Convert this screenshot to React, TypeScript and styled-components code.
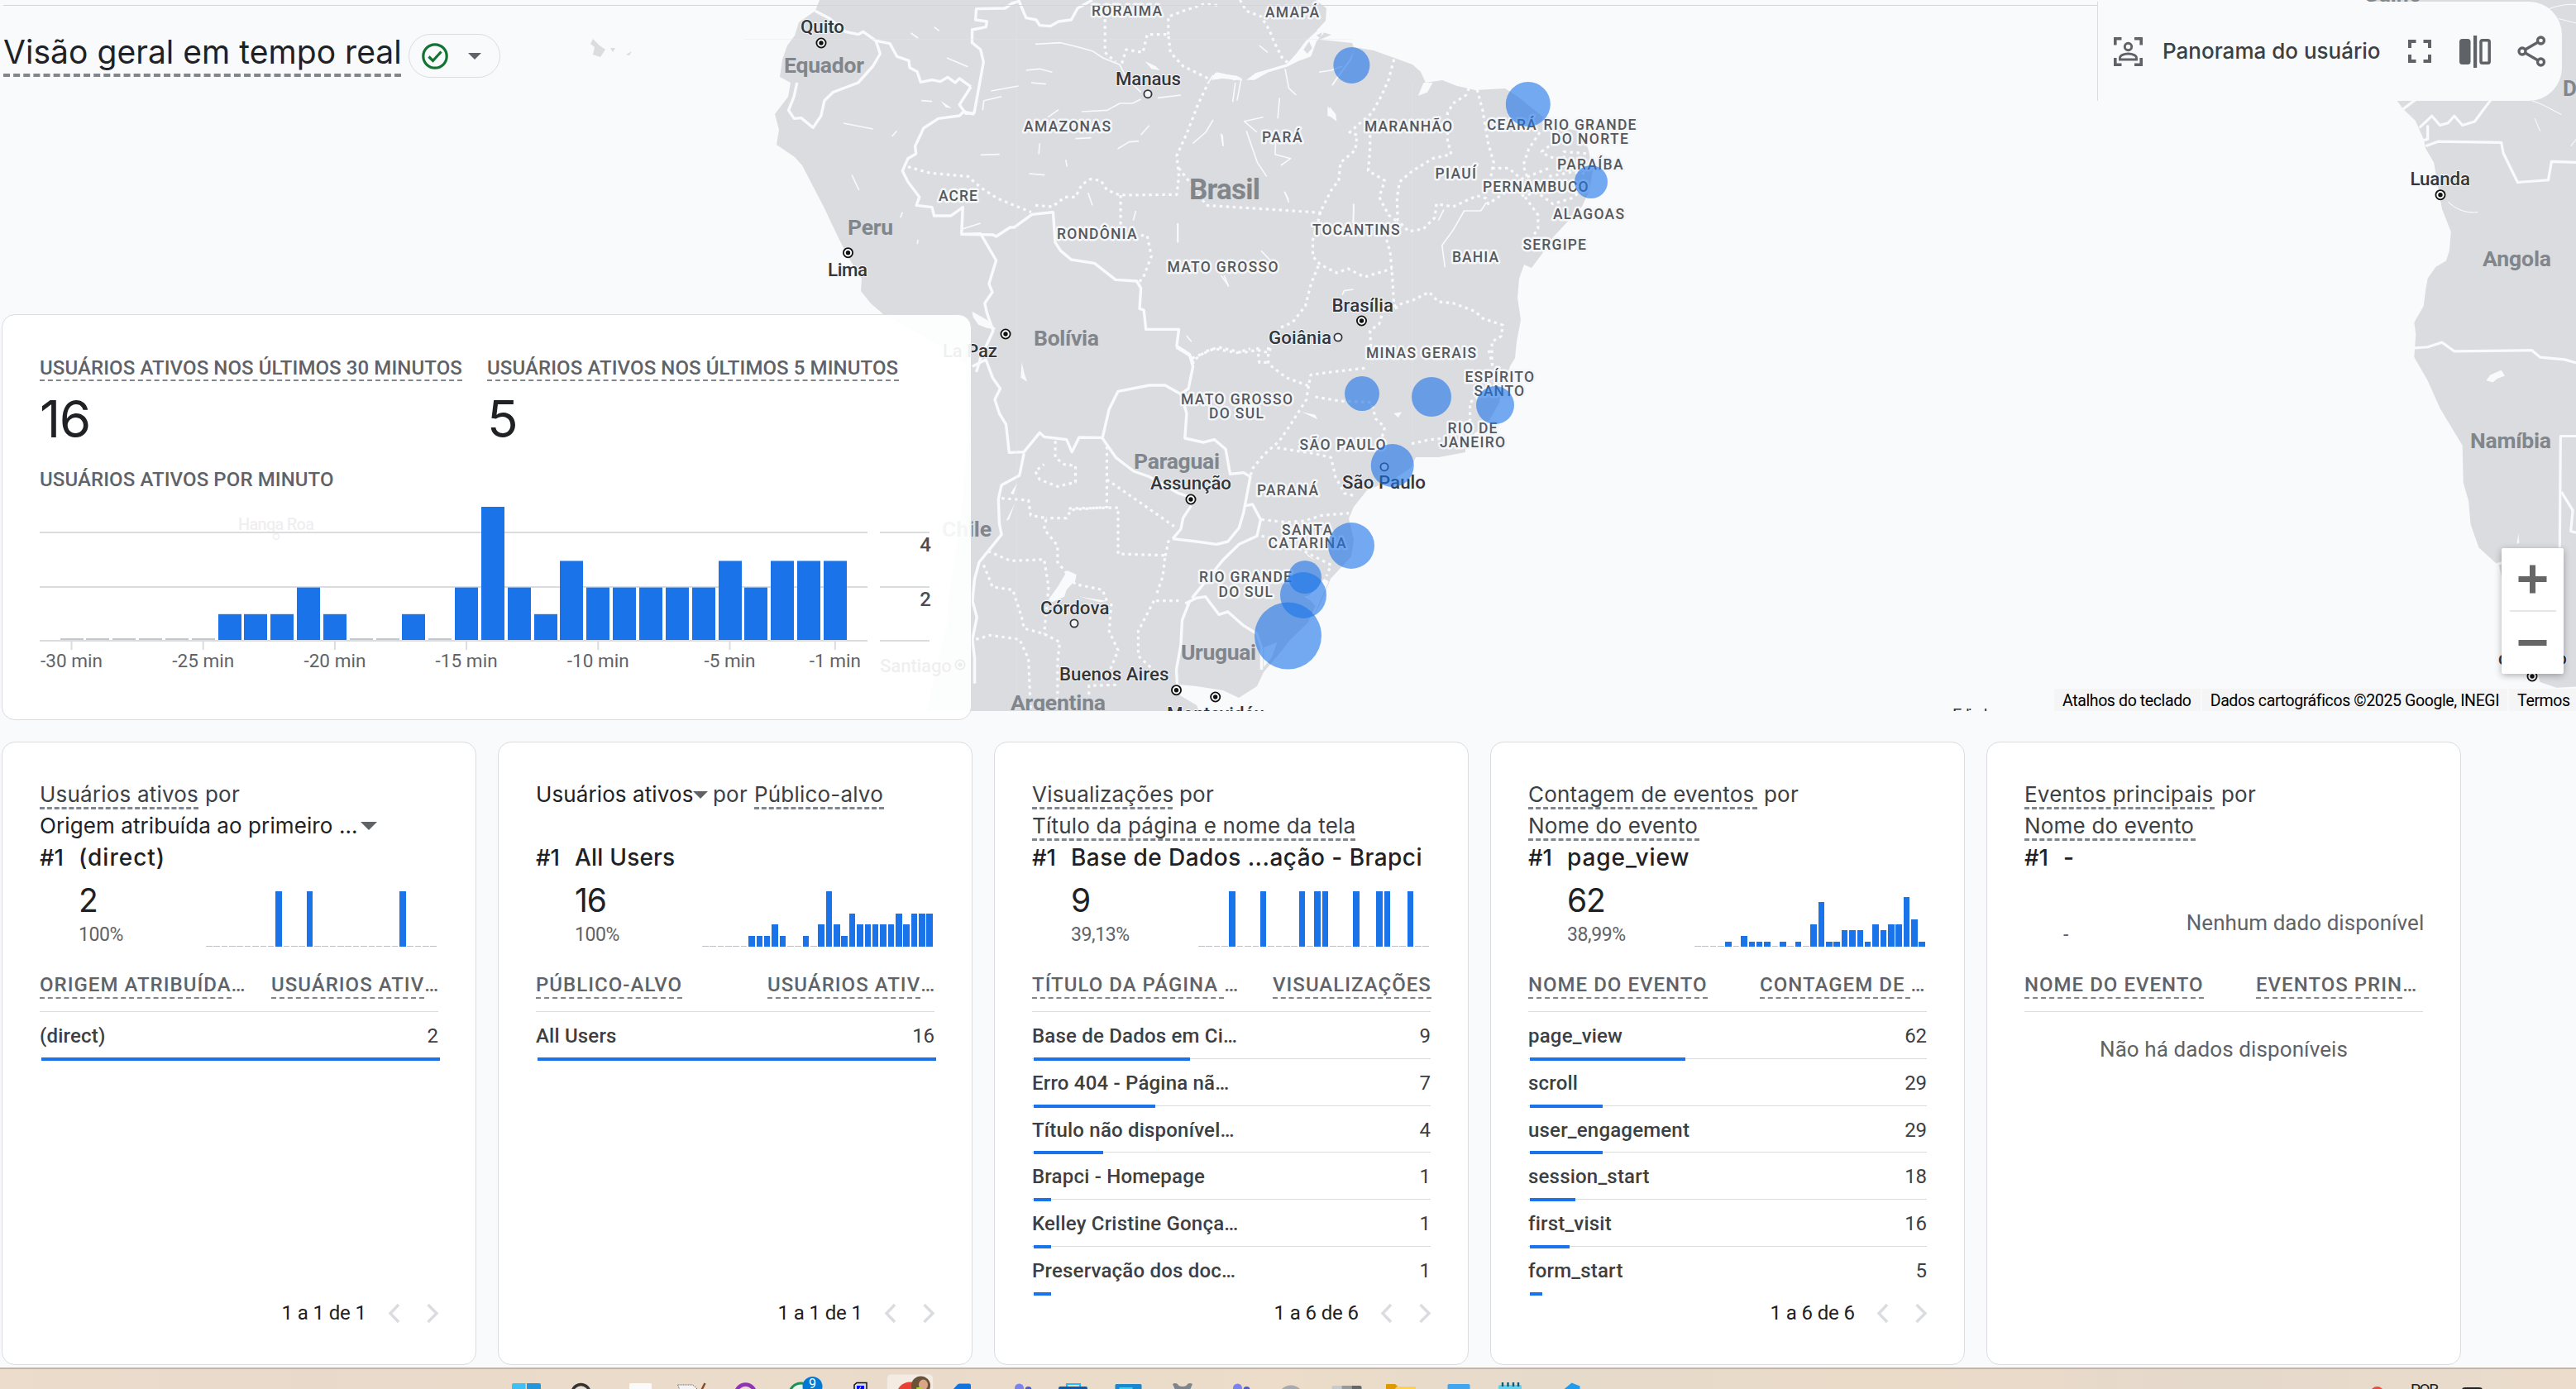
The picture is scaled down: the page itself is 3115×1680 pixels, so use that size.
import React from 'react';
import styled, { createGlobalStyle } from 'styled-components';

const SANS = "Roboto, 'Liberation Sans', sans-serif";
const DISPLAY = "Inter, Roboto, 'Liberation Sans', sans-serif";
const SEA = '#f8fafc';
const LAND = '#dbdce0';
const BLUE = '#1a73e8';

const Global = createGlobalStyle`
  * { box-sizing: border-box; }
  html, body { margin: 0; padding: 0; background: ${SEA}; }
  body { font-family: ${SANS}; color: #202124; overflow: hidden; }
`;

const Page = styled.div`
  width: 3115px;
  height: 1680px;
  display: flex;
  flex-direction: column;
  background: ${SEA};
  overflow: hidden;
`;

/* ---------- map ---------- */

const Hero = styled.section`
  position: relative;
  height: 897px;
  flex: none;
  display: grid;
  grid-template-columns: 1173px 1fr 579px;
`;

const MapSvg = styled.svg`
  position: absolute;
  left: 0;
  top: 0;
  display: block;
  font-family: ${SANS};
`;

const TopRule = styled.div`
  position: absolute;
  left: 4px;
  top: 6px;
  width: 2551px;
  height: 1px;
  background: #d3d5d8;
`;

type Label = [string, number, number, number];

const states: Label[] = [
  ['RORAIMA', 1320, 1405, 19.3], ['AMAPÁ', 1530, 1595, 21], ['AMAZONAS', 1238, 1343, 159],
  ['ACRE', 1135, 1182, 242.5], ['PARÁ', 1526, 1574.5, 172], ['RONDÔNIA', 1278, 1374.5, 289],
  ['TOCANTINS', 1587, 1692.5, 284], ['MATO GROSSO', 1411.5, 1545.5, 329], ['MARANHÃO', 1650, 1756, 159],
  ['CEARÁ', 1798, 1857.5, 156.5], ['RIO GRANDE', 1866.5, 1978.5, 157], ['DO NORTE', 1876, 1969, 174],
  ['PARAÍBA', 1883, 1962.5, 205], ['PIAUÍ', 1735.5, 1785, 216], ['PERNAMBUCO', 1793, 1920.5, 232],
  ['ALAGOAS', 1878, 1964, 265], ['SERGIPE', 1841.5, 1918, 302], ['BAHIA', 1756, 1812, 317],
  ['MINAS GERAIS', 1652, 1785, 432.6], ['MATO GROSSO', 1428, 1563, 489], ['DO SUL', 1462, 1528, 506],
  ['ESPÍRITO', 1771.5, 1855, 461.7], ['SANTO', 1782.5, 1843, 479], ['RIO DE', 1750.5, 1810.5, 524],
  ['JANEIRO', 1741, 1820, 541], ['SÃO PAULO', 1571.5, 1675.5, 543.7], ['PARANÁ', 1520, 1594, 599],
  ['SANTA', 1550, 1611, 646.7], ['CATARINA', 1533.5, 1627.5, 663], ['RIO GRANDE', 1450, 1562, 704],
  ['DO SUL', 1473.5, 1539, 721.5],
];

const countries: Label[] = [
  ['Equador', 948, 1045, 88], ['Peru', 1025, 1080, 284], ['Bolívia', 1250, 1329, 418],
  ['Paraguai', 1371, 1475, 566.5], ['Chile', 1139, 1199, 648.5], ['Uruguai', 1428, 1519, 798],
  ['Argentina', 1222, 1337, 859], ['Angola', 3002, 3085, 322], ['Namíbia', 2987, 3085, 541.5],
  ['Guiné', 2858, 2927, 2],
];

const cities: Label[] = [
  ['Manaus', 1349, 1428, 102.5], ['Quito', 968, 1021, 40], ['Lima', 1001, 1049, 333.5],
  ['La Paz', 1140, 1206, 432], ['Brasília', 1610.5, 1685, 376.5], ['Goiânia', 1534, 1610, 415.6],
  ['Assunção', 1391, 1489, 591.7], ['São Paulo', 1623, 1724, 591], ['Córdova', 1258, 1341.5, 742.7],
  ['Buenos Aires', 1281, 1413.5, 822.7], ['Montevidéu', 1411, 1529, 871], ['Santiago', 1064, 1151, 812.6],
  ['Luanda', 2914.5, 2987, 224], ['do Cabo', 3021, 3104, 804], ['Cidade', 3030, 3094, 784],
];

const capitals: [number, number][] = [
  [993, 52], [1025.5, 305.7], [1216, 404], [1646.5, 388], [1440, 604], [1422.5, 834.7],
  [1469.7, 843], [1161, 804], [2951, 235.7], [3062, 818],
];
const towns: [number, number][] = [[1388, 113.7], [1618, 408], [1674, 564.7], [1299, 754]];

const bubbles: [number, number, number][] = [
  [1634.4, 79, 22], [1847.8, 126, 27], [1924, 220, 20], [1647, 476, 21], [1731, 480, 24],
  [1808, 490, 23], [1683.7, 563, 26], [1634, 660, 28], [1578, 698, 20], [1576, 720, 28], [1557.5, 769, 40.5],
];

const northFrontiers = [
  '650,0 668,65 692,72 700,92 725,95 745,78 775,72 790,30 825,0',
  '650,5 635,12 618,30 550,32 548,72 575,78 573,98 540,108 540,155 560,180 567,225 545,410 525,412 510,380 537,315',
  '168,40 200,65 240,115 270,125 282,115 312,148 345,158 362,205 390,220 392,245 410,260 418,298 445,290 465,296 482,280 500,300 510,285 537,315',
  '312,148 322,195 305,240 270,300 210,335 190,365 182,420 163,463 135,428 118,430 105,400 118,350 125,300',
  '545,415 520,405 510,420 460,430 425,465 405,530 407,558 388,575 375,620 388,660 415,715 408,745 445,752 450,783 490,783 518,752 515,850 560,848 597,945 580,1030 588,1060 570,1100 575,1135 590,1200 560,1300 550,1350',
  '515,850 590,852 597,858 630,825 640,825 682,778 732,770 737,880 750,910 775,942 830,955 880,1015 930,1020 940,1045 937,1120 947,1125 952,1195 1030,1195 1025,1255 1055,1285 1065,1320',
];
const northStates = [
  '388,605 440,628 530,640 560,680 600,720 680,770', '690,745 730,750 760,715 785,715 800,670 820,650 845,655 860,690 890,708 1025,706 1030,640 1025,565 1050,480 1075,380 1100,300',
  '855,70 855,190 880,225', '895,230 905,180 945,190 955,125 1005,125 1010,190 1040,240 1100,285', '1005,125 1005,60 1040,40 1090,15 1130,20',
  '1030,610 1070,690 1095,745 1370,772', '892,708 892,850 955,855 965,930 945,1010 930,1030', '1175,0 1190,40 1225,60 1245,110 1255,150 1275,210 1290,230',
];
const northRivers = [
  '690,160 750,155 790,170 825,185 850,210 890,235 905,280 940,335', '940,360 920,375 890,375 860,400 800,405', '1035,345 980,355',
  '1215,480 1185,440 1230,425', '668,255 700,250 730,262', '680,300 715,305', '565,400 568,365 610,350', '585,330 620,320 650,312',
  '235,447 305,468', '395,120 412,138', '450,98 462,112', '420,365 445,368', '480,210 530,242', '350,495 362,475', '255,635 272,690',
  '560,562 605,560', '675,630 712,635', '785,503 822,500', '885,540 912,515 935,512', '940,490 960,455', '762,580 765,605', '1130,485 1135,530',
  '1168,365 1178,285', '1100,300 1110,275 1175,282', '410,885 412,870', '720,425 745,398', '375,770 370,790', '815,700 825,745', '922,800 928,765', '1027,810 1027,880',
  '515,832 560,810', '1445,740 1443,810', '1280,695 1290,725', '1260,500 1258,560 1295,575 1272,600', '1130,1000 1147,1035', '1048,1218 1060,1240', '700,520 698,560',
];
const eastStates = [
  '640,215 625,290 605,350 580,410 545,450 520,480 540,490 535,545 495,590 490,655 470,690 440,770 435,800 420,870 420,930 440,960 485,990 515,975 560,1005 635,975',
  '435,965 415,1030 400,1110 365,1170 330,1190 300,1280 270,1270 230,1280 165,1260 130,1275 95,1310',
  '843,320 835,345 800,375 785,410 785,510 795,560 745,575 690,620 655,660 648,720 650,800 680,840 720,830 750,790 755,740 800,750 865,710 890,720 895,740 940,700',
  '865,325 880,400 895,520 910,590 905,620 900,660', '575,490 575,540 570,620 615,655 600,715 625,780 650,805',
  '620,870 630,920 635,1000 640,1110 690,1090 735,1060 760,1095 800,1100 860,1130 880,1155 935,1180 930,1220 905,1240 905,1320',
  '1035,480 1005,540 990,600 1000,640', '905,610 950,610 985,650 1060,610', '985,710 1030,700 1070,740 1120,720 1140,700', '995,715 1030,780 1030,830 1015,860',
  '1060,530 1040,550 1060,570 1100,575 1100,550 1160,557', '1060,640 1120,625 1160,630', '650,1115 610,1130 600,1175 575,1200 580,1320', '270,1260 275,1315 300,1315',
];
const eastRivers = [
  '345,250 355,320 375,345', '240,475 270,590 295,640', '530,740 530,810', '890,735 875,765 830,765 800,835 770,890 778,970',
  '437,262 470,255 500,240', '330,355 325,430', '150,435 130,480 95,520', '203,370 210,300', '275,165 298,190', '175,490 177,530',
  '55,810 55,880', '280,910 305,945', '180,1000 192,1040', '500,1070 505,1055 530,1050', '345,698 355,735', '775,760 760,800',
];
const southFrontiers = [
  '595,0 625,30 632,70 622,150 605,170 618,240 614,330 655,345 680,335 705,370 715,460 745,455 760,470 745,600 735,655 710,705 685,715 640,705 587,695',
  '605,170 570,138 535,138 465,160 445,225 430,330',
  '140,70 170,45 185,110 202,150 190,190 200,240 215,280 222,382 255,380 275,340 290,310 300,325 350,335 362,380 378,327 430,328',
  '255,385 245,465 205,500 198,550 200,640 205,680 175,740 155,780 145,840 140,920 150,980 140,1060 145,1130 145,1220',
  '430,330 460,400 500,450 535,470 600,530 628,545', '628,575 610,620 605,660 587,695',
  '750,575 765,570 783,625 775,685 735,715 700,770 680,810 655,860 630,910',
  '615,930 640,910 660,905 690,970 710,960 745,1010 775,1040 785,1090 785,1170', '625,920 608,990 605,1080 595,1170 597,1225',
];
const southStates = [
  '630,40 680,5 730,20 760,5', '800,0 800,60 840,110 890,140 895,100 940,90 1020,75', '890,140 885,190 850,280 825,340 790,390 765,440 760,470',
  '905,180 960,195 1030,200 1040,260 1060,290 1050,350', '820,365 900,385 940,400 950,470 970,530 995,540', '785,625 840,635 880,630 920,610 980,602',
  '785,685 830,700 880,740 940,790 930,830', '1120,350 1160,335 1200,330', '1250,270 1250,200 1290,160 1300,60 1290,0',
  '325,340 325,400 345,425 370,430 370,490 330,505 290,480 280,450 300,425', '440,360 440,480 520,570 590,650',
  '205,548 265,555 270,610 305,620 300,660 330,720 330,780 370,860 430,880 440,920', '355,585 465,582 465,750 570,755 565,830 550,900',
  '545,920 510,1030 510,1120 550,1180', '440,480 440,580 360,590 350,620 305,620', '175,740 225,775 300,770 310,870', '165,790 185,870 230,880 250,980 255,1020 300,1040 335,1070 330,1140 330,1300',
  '148,1060 180,1045 245,1060 265,1130 270,1320', '450,930 445,1030 465,1100 440,1200', '550,920 600,920', '578,700 570,760', '400,1260 400,1228 465,1225', '310,870 300,1040',
];
const africaFrontiers = [
  '1145,235 1175,215', '1200,315 1230,305 1385,307 1390,330 1425,393 1500,388 1508,348 1568,350',
  '1185,275 1215,250 1235,270 1255,265 1270,250 1290,270 1320,262 1340,238 1360,215', '1205,270 1205,300 1195,302',
  '1172,750 1205,748 1240,738 1270,757 1460,755 1480,770 1540,775 1568,782', '1568,940 1530,940 1528,1180', '1532,1060 1560,1100 1555,1145 1568,1148', '1370,1218 1390,1212',
];

function Lines({ pts, dotted, width }: { pts: string[]; dotted?: boolean; width: number }) {
  return (
    <>
      {pts.map((p, i) => (
        <polyline
          key={i}
          points={p}
          fill="none"
          stroke={SEA}
          strokeWidth={width}
          strokeDasharray={dotted ? '3.5 4.5' : undefined}
          strokeLinejoin="round"
          vectorEffect="non-scaling-stroke"
        />
      ))}
    </>
  );
}

function Labels({ items, size, weight, color, halo }: { items: Label[]; size: number; weight: number; color: string; halo?: number }) {
  return (
    <>
      {items.map(([t, l, r, y], i) => (
        <text
          key={i}
          x={l}
          y={y}
          textLength={r - l}
          fontSize={size}
          fontWeight={weight}
          fill={color}
          stroke={halo ? '#f5f6f8' : 'none'}
          strokeWidth={halo}
          strokeLinejoin="round"
          paintOrder="stroke"
        >
          {t}
        </text>
      ))}
    </>
  );
}

function WorldMap() {
  return (
    <MapSvg width={3115} height={860} viewBox="0 0 3115 860">
      <rect width={3115} height={860} fill={SEA} />
      <path
        fill={LAND}
        d="M991 0L986 13 966 27 961 43 952 55 946 72 943 93 956 100 953 117 937 138 942 157 939 175 961 190 970 200 984 227 997 252 1004 267 1015 290 1027 313 1042 337 1041 352 1053 367 1068 380 1104 400 1140 420 1168 440 1170 530 1163 617 1157 660 1148 720 1146 752 1134 800 1121 860
        L1450 860 1447 853 1425 840 1425 828 1447 830 1479 835 1498 844 1520 830 1528 813 1550 787 1561 773 1588 747 1601 720 1609 700 1634 673 1637 653 1631 627 1637 613 1653 593 1685 580 1706 566 1712 553 1740 553 1772 547 1772 533 1799 512 1813 487 1818 467 1826 443 1832 433 1834 413 1839 387 1835 360 1837 337 1843 320 1852 324 1864 308 1878 287 1891 273 1913 250 1922 230 1926 207 1921 182 1913 160 1891 154 1864 140 1837 118 1820 107 1784 109 1762 104 1744 97 1724 100 1718 87 1708 78 1686 70 1661 61 1637 57 1635 52 1596 48 1610 42 1592 37 1603 25 1604 10 1591 0Z"
      />
      <path fill={LAND} d="M717 47l8 8 7 5-6 9-9-3 2-9-5-4zM738 58l6 0-3 5zM757 66l7-4-3 5z" />
      <g transform="translate(2340 0) scale(.49432 .56117)">
        <path
          fill={LAND}
          d="M1060 0L1060 100 1130 217 1145 235 1175 260 1195 300 1200 320 1220 350 1230 400 1240 450 1262 500 1258 540 1250 562 1225 575 1205 600 1200 625 1195 660 1172 695 1176 720 1172 770 1205 820 1235 880 1290 960 1292 1040 1305 1080 1310 1130 1330 1180 1380 1220 1385 1240 1400 1330 1470 1440 1480 1470 1520 1482 1568 1480V0Z"
        />
        <Lines pts={africaFrontiers} width={3.2} />
        <path fill={SEA} d="M1348 820L1358 808 1385 798 1394 810 1375 816 1365 824ZM1427 1150l2 20-6 2z" />
        <path fill="none" stroke={SEA} strokeWidth={2} d="M1255 435C1275 452 1300 460 1328 457M1460 217C1490 225 1515 240 1532 247M1467 255L1480 283M1555 315L1568 300M1500 20C1520 12 1550 8 1568 10M1525 40L1568 50" />
      </g>
      <g transform="translate(900 0) scale(.5102 .33333)">
        <Lines pts={northRivers} width={1.6} />
        <Lines pts={northStates} dotted width={3.2} />
        <Lines pts={northFrontiers} width={3.4} />
        <path fill={SEA} d="M540 1130L575 1160 597 1195 575 1190 555 1178 542 1150ZM950 222L975 240 985 255 965 250ZM1388 388L1402 415 1404 440 1392 425 1382 420ZM465 365L492 392 478 390ZM1110 290L1120 262 1160 275 1180 285 1160 292 1130 270Z" />
      </g>
      <g transform="translate(1400 0) scale(.44643 .33333)">
        <Lines pts={eastRivers} width={1.6} />
        <Lines pts={eastStates} dotted width={3.2} />
        <path fill={SEA} d="M240 290L265 265 350 232 375 195 400 150 445 95 450 120 430 150 415 205 380 222 350 242 300 262 262 290ZM720 300L745 300 730 335 705 348ZM460 385L475 410 485 440 470 425 460 415ZM470 310L490 270 520 215 532 180 525 215 485 290 475 310ZM145 290L155 265 215 275 230 292 175 285Z" />
        <path fill={LAND} d="M395 180L410 150 418 175 405 195ZM430 128L445 118 440 138Z" />
      </g>
      <g transform="translate(1100 420) scale(.542 .33333)">
        <Lines pts={southStates} dotted width={3.2} />
        <Lines pts={southFrontiers} width={3.4} />
        <path fill={SEA} d="M352 810L372 825 370 845 350 880 345 905 318 925 310 915 330 870ZM380 905L440 920 425 925ZM250 55L256 95 262 125 248 110ZM225 530L240 492 232 535ZM215 630L235 565 222 625ZM875 235L905 245 910 262ZM1080 240L1098 235 1090 255ZM880 740L905 775 890 760ZM835 1090L850 1060 885 1010 905 940 895 920 880 905 892 900 925 840 935 850 900 980 860 1050ZM790 1090L820 1070 808 1125 790 1160Z" />
      </g>
      <path d="M1229 0V860M900 47.500H1635M1708 100V527" stroke="#e6e7ea" strokeWidth={1} opacity={0.4} />

      <Labels items={states} size={17.5} weight={500} color="#55595e" halo={5} />
      <Labels items={countries} size={26.5} weight={700} color="#80868b" />
      <text x={1438} y={241} textLength={86} fontSize={35} fontWeight={700} fill="#80868b">Brasil</text>
      <text x={3099} y={116} fontSize={26} fontWeight={700} fill="#80868b">D</text>
      <Labels items={cities} size={22.3} weight={500} color="#33363a" halo={2} />
      <text x={288} y={641} textLength={92} fontSize={20} fontWeight={500} fill="#33363a">Hanga Roa</text>
      <text x={2361} y={872} fontSize={20} textLength={82} fill="#33363a">Edimburgo</text>

      {capitals.map(([x, y], i) => (
        <g key={i}>
          <circle cx={x} cy={y} r={5.6} fill="#fff" stroke="#111" strokeWidth={1.8} />
          <circle cx={x} cy={y} r={2.7} fill="#111" />
        </g>
      ))}
      {towns.map(([x, y], i) => (
        <circle key={i} cx={x} cy={y} r={4.600} fill="#f4f5f7" stroke="#33363a" strokeWidth={1.8} />
      ))}
      <circle cx={334} cy={649} r={3.5} fill="none" stroke="#33363a" strokeWidth={1.6} />
      {bubbles.map(([x, y, r], i) => (
        <circle key={i} cx={x} cy={y} r={r} fill={BLUE} fillOpacity={0.6} />
      ))}
    </MapSvg>
  );
}

/* ---------- left column: title + realtime card ---------- */

const LeftColumn = styled.div`
  position: relative;
  display: flex;
  flex-direction: column;
  padding: 41px 0 0 2px;
`;

const TitleRow = styled.div`
  display: flex;
  align-items: flex-start;
  gap: 9px;
  height: 339px;
  padding-left: 2px;
`;

const PageTitle = styled.h1`
  margin: 0;
  font: 400 39px/44px ${DISPLAY};
  letter-spacing: 0.04px;
  width: 481px;
  white-space: nowrap;
  border-bottom: 4px dashed #80868b;
  height: 52px;
`;

const StatusPill = styled.button`
  display: flex;
  align-items: center;
  justify-content: space-between;
  width: 111px;
  height: 53px;
  padding: 0 22px 0 14px;
  border: 1px solid #dadce0;
  border-radius: 27px;
  background: transparent;
`;

const Caret = styled.span<{ $w: number }>`
  display: inline-block;
  border: ${p => p.$w / 2}px solid transparent;
  border-top-color: #5f6368;
  border-bottom-width: 0;
`;

const RealtimeCard = styled.div`
  width: 1173px;
  height: 491px;
  padding: 50px 46px 0 45px;
  border: 1px solid #dadce0;
  border-radius: 16px;
  background: rgba(255, 255, 255, 0.92);
`;

const Metrics = styled.div`
  display: flex;
  gap: 30px;
`;

const MetricLabel = styled.div<{ $w: number; $plain?: boolean }>`
  width: ${p => p.$w}px;
  font: 500 24px/28px ${SANS};
  letter-spacing: 0.1px;
  white-space: nowrap;
  color: #5f6368;
  border-bottom: ${p => (p.$plain ? 'none' : '2px dashed #80868b')};
`;

const MetricValue = styled.div`
  font: 400 62px/70px ${DISPLAY};
  letter-spacing: -1.5px;
  padding-top: 11px;
  height: 105px;
`;

const ChartSvg = styled.svg`
  display: block;
  margin-top: 6px;
  font-family: ${SANS};
`;

const minutes = [0, 0, 0, 0, 0, 0, 1, 1, 1, 2, 1, 0, 0, 1, 0, 2, 5, 2, 1, 3, 2, 2, 2, 2, 2, 3, 2, 3, 3, 3];

function MinuteChart() {
  const cx = (i: number) => 38.5 + i * 31.84;
  const ticks: [number, string][] = [[0, '-30 min'], [5, '-25 min'], [10, '-20 min'], [15, '-15 min'], [20, '-10 min'], [25, '-5 min'], [29, '-1 min']];
  return (
    <ChartSvg width={1082} height={220} viewBox="0 0 1082 220">
      {[43, 109, 174].map(y => (
        <path key={y} d={`M0 ${y + 1}H1001M1016 ${y + 1}H1076`} stroke="#dadce0" strokeWidth={2} />
      ))}
      {minutes.map((v, i) => (
        <rect
          key={i}
          x={Math.round(cx(i) - 14)}
          width={28}
          y={v ? 174 - v * 32.200 + (v < 5 ? 1 : 0) : 172}
          height={v ? v * 32.200 - (v < 5 ? 1 : 0) : 2}
          fill={v ? BLUE : '#c4c7cb'}
        />
      ))}
      {ticks.map(([i, t]) => (
        <g key={i}>
          <path d={`M${cx(i)} 176v10`} stroke="#dadce0" strokeWidth={2} />
          <text x={cx(i)} y={207} fontSize={22.5} textLength={t.length === 6 ? 62 : 75} fill="#5f6368" textAnchor="middle">{t}</text>
        </g>
      ))}
      <text x={1078} y={66.500} fontSize={24} fontWeight={500} fill="#4a4d51" textAnchor="end">4</text>
      <text x={1078} y={132.500} fontSize={24} fontWeight={500} fill="#4a4d51" textAnchor="end">2</text>
    </ChartSvg>
  );
}

/* ---------- right column: toolbar + zoom + attribution ---------- */

const RightColumn = styled.div`
  position: relative;
  grid-column: 3;
  display: flex;
  flex-direction: column;
  padding-top: 2px;
  height: 860px;
`;

const Toolbar = styled.div`
  display: flex;
  align-items: center;
  width: 562px;
  height: 120px;
  padding-left: 19px;
  background: ${SEA};
  border-left: 1px solid #dadce0;
  border-radius: 0 40px 40px 0;
`;

const Snapshot = styled.span`
  width: 262px;
  margin: 0 34.5px 0 24px;
  font: 450 26px/36px ${DISPLAY};
  letter-spacing: 0;
  color: #3c4043;
  white-space: nowrap;
`;

const ToolIcon = styled.svg<{ $gap?: number }>`
  display: block;
  flex: none;
  overflow: visible;
  margin-right: ${p => p.$gap || 0}px;
`;

const ZoomBox = styled.div`
  display: flex;
  flex-direction: column;
  align-items: center;
  width: 75px;
  height: 152px;
  margin: 541px 0 0 489px;
  background: #fff;
  border-radius: 2px;
  box-shadow: 0 2px 8px rgba(0, 0, 0, 0.3);
`;

const ZoomDivider = styled.div`
  width: 56px;
  height: 2px;
  background: #e6e6e6;
`;

const Credits = styled.div`
  display: flex;
  gap: 2px;
  margin: auto 0 0 -52px;
`;

const Credit = styled.span<{ $w: number }>`
  width: ${p => p.$w}px;
  height: 27px;
  padding-left: 10px;
  background: #f5f5f6;
  font: 400 19.5px/29px ${SANS};
  letter-spacing: -0.38px;
  color: #000;
  white-space: nowrap;
`;

/* ---------- cards ---------- */

const Cards = styled.section`
  display: flex;
  gap: 26px;
  padding-left: 2px;
  height: 757px;
  flex: none;
`;

const Card = styled.article`
  display: flex;
  flex-direction: column;
  width: 574px;
  height: 754px;
  padding: 44px 45px 48px;
  border: 1px solid #dadce0;
  border-radius: 16px;
  background: #fff;
`;

const CardTitle = styled.div`
  height: 76px;
  font: 400 26px/38px ${DISPLAY};
  letter-spacing: 0.2px;
  color: #3c4043;
  white-space: nowrap;
  & > div { height: 38px; display: flex; align-items: flex-start; }
`;

const Dashed = styled.span<{ $w: number }>`
  display: inline-block;
  width: ${p => p.$w}px;
  height: 37px;
  border-bottom: 3px dashed #80868b;
`;

const Picker = styled.span<{ $w: number }>`
  display: flex;
  align-items: center;
  justify-content: space-between;
  width: ${p => p.$w}px;
  letter-spacing: 0.1px;
  color: #202124;
`;

const By = styled.span`
  margin-left: 8px;
`;

const TopItem = styled.div`
  display: flex;
  height: 38px;
  font: 450 28px/38px ${DISPLAY};
  color: #202124;
  white-space: nowrap;
`;

const Rank = styled.span`
  width: 47px;
  font-size: 27.5px;
`;

const ItemName = styled.span<{ $ls?: number }>`
  letter-spacing: ${p => p.$ls ?? 0.5}px;
`;

const StatRow = styled.div`
  display: flex;
  justify-content: space-between;
  height: 92px;
  padding: 11px 0 0 47px;
`;

const StatValue = styled.div`
  font: 400 39px/44px ${DISPLAY};
  letter-spacing: -1.2px;
  height: 47px;
`;

const StatShare = styled.div`
  font: 400 23px/34px ${SANS};
  letter-spacing: -0.4px;
  color: #5f6368;
`;

const Spark = styled.div`
  display: flex;
  align-items: flex-end;
  gap: 1.77px;
  height: 78px;
  margin-right: 2px;
`;

const SparkBar = styled.span`
  width: 7.6px;
  min-height: 1px;
`;

const NoSpark = styled.div`
  display: flex;
  justify-content: center;
  width: 285px;
  overflow: hidden;
  white-space: nowrap;
  font: 400 26px/36px ${SANS};
  letter-spacing: 0.3px;
  color: #5f6368;
  padding-top: 31px;
`;

const NoSparkText = styled.span`
  flex: none;
  font-size: 26px;
  letter-spacing: 0.05px;
`;

const HeadRow = styled.div`
  display: flex;
  justify-content: space-between;
  height: 47px;
  margin-top: 29px;
  border-bottom: 1px solid #dadce0;
  font: 500 24px/28px ${SANS};
  letter-spacing: 1.02px;
  color: #5f6368;
  white-space: nowrap;
`;

const HeadCell = styled.span<{ $w: number }>`
  display: flex;
  width: ${p => p.$w}px;
`;

const HeadText = styled.span`
  height: 31px;
  border-bottom: 2px dashed #80868b;
`;

const DataRow = styled.div`
  position: relative;
  display: flex;
  justify-content: space-between;
  height: 56.8px;
  border-bottom: 1px solid #dadce0;
  font: 500 24px/58px ${SANS};
  letter-spacing: 0.2px;
  color: #3c4043;
  white-space: nowrap;
  &:last-child { border-bottom-color: transparent; }
`;

const DataValue = styled.span`
  font-weight: 400;
  letter-spacing: -0.1px;
`;

const RowBar = styled.span`
  position: absolute;
  left: 2px;
  bottom: -3px;
  height: 4px;
  background: ${BLUE};
`;

const EmptyTable = styled.div`
  padding-top: 27px;
  text-align: center;
  font: 400 26px/36px ${SANS};
  letter-spacing: 0.1px;
  color: #5f6368;
`;

const Pager = styled.div`
  display: flex;
  justify-content: flex-end;
  align-items: center;
  height: 28px;
  margin-top: auto;
  font: 400 24px/28px ${SANS};
  letter-spacing: -0.1px;
  color: #202124;
`;

interface CardData {
  title: React.ReactNode;
  item: string;
  itemSpacing?: number;
  value: string;
  share: string;
  spark: number[] | null;
  head: [string, boolean, string, boolean, number];
  rows: [string, string, number][];
  page?: string;
}

const only = (idx: number[]) => Array.from({ length: 30 }, (_, i) => (idx.includes(i) ? 67 : 0));

const cards: CardData[] = [
  {
    title: (<><div><Dashed $w={192}>Usuários ativos</Dashed><By>por</By></div><div><Picker $w={408}>Origem atribuída ao primeiro ...<Caret $w={20} /></Picker></div></>),
    item: '(direct)', itemSpacing: 1, value: '2', share: '100%', spark: only([9, 13, 25]),
    head: ['ORIGEM ATRIBUÍDA', true, 'USUÁRIOS ATIV', true, 202], rows: [['(direct)', '2', 482]], page: '1 a 1 de 1',
  },
  {
    title: (<div><Picker $w={206}>Usuários ativos<Caret $w={18} /></Picker><By>por</By><By><Dashed $w={157}>Público-alvo</Dashed></By></div>),
    item: 'All Users', itemSpacing: 0.2, value: '16', share: '100%', spark: minutes.map(v => v * 13.4),
    head: ['PÚBLICO-ALVO', false, 'USUÁRIOS ATIV', true, 202], rows: [['All Users', '16', 482]], page: '1 a 1 de 1',
  },
  {
    title: (<><div><Dashed $w={170}>Visualizações</Dashed><By>por</By></div><div><Dashed $w={391}>Título da página e nome da tela</Dashed></div></>),
    item: 'Base de Dados ...ação - Brapci', itemSpacing: 0.45, value: '9', share: '39,13%', spark: only([4, 8, 13, 15, 16, 20, 23, 24, 27]),
    head: ['TÍTULO DA PÁGINA ', true, 'VISUALIZAÇÕES', false, 191],
    rows: [['Base de Dados em Ci…', '9', 189], ['Erro 404 - Página nã…', '7', 147], ['Título não disponível…', '4', 84], ['Brapci - Homepage', '1', 21], ['Kelley Cristine Gonça…', '1', 21], ['Preservação dos doc…', '1', 21]],
    page: '1 a 6 de 6',
  },
  {
    title: (<><div><Dashed $w={277}>Contagem de eventos</Dashed><By>por</By></div><div><Dashed $w={207}>Nome do evento</Dashed></div></>),
    item: 'page_view', itemSpacing: 0.9, value: '62', share: '38,99%',
    spark: [0, 0, 0, 0, 6, 0, 13, 6, 6, 6, 0, 6, 0, 6, 0, 27, 54, 6, 6, 20, 20, 20, 6, 27, 20, 27, 27, 60, 33, 6],
    head: ['NOME DO EVENTO', false, 'CONTAGEM DE ', true, 202],
    rows: [['page_view', '62', 188], ['scroll', '29', 88], ['user_engagement', '29', 88], ['session_start', '18', 55], ['first_visit', '16', 48], ['form_start', '5', 15]],
    page: '1 a 6 de 6',
  },
  {
    title: (<><div><Dashed $w={230}>Eventos principais</Dashed><By>por</By></div><div><Dashed $w={207}>Nome do evento</Dashed></div></>),
    item: '-', value: '', share: '-', spark: null,
    head: ['NOME DO EVENTO', false, 'EVENTOS PRIN', true, 202], rows: [],
  },
];

function ReportCard({ d }: { d: CardData }) {
  return (
    <Card>
      <CardTitle>{d.title}</CardTitle>
      <TopItem>
        <Rank>#1</Rank>
        <ItemName $ls={d.itemSpacing}>{d.item}</ItemName>
      </TopItem>
      <StatRow>
        <div>
          <StatValue>{d.value}</StatValue>
          <StatShare>{d.share}</StatShare>
        </div>
        {d.spark ? (
          <Spark>
            {d.spark.map((h, i) => (
              <SparkBar key={i} style={{ height: h || 1, background: h ? BLUE : '#bdc1c6' }} />
            ))}
          </Spark>
        ) : (
          <NoSpark><NoSparkText>Nenhum dado disponível</NoSparkText></NoSpark>
        )}
      </StatRow>
      <HeadRow>
        <HeadCell $w={250}><HeadText>{d.head[0].replace(/ $/, '\u00a0')}</HeadText>{d.head[1] && '…'}</HeadCell>
        <HeadCell $w={d.head[4]}><HeadText>{d.head[2].replace(/ $/, '\u00a0')}</HeadText>{d.head[3] && '…'}</HeadCell>
      </HeadRow>
      <div>
        {d.rows.map(([n, v, w], i) => (
          <DataRow key={i}>
            <span>{n}</span>
            <DataValue>{v}</DataValue>
            <RowBar style={{ width: w }} />
          </DataRow>
        ))}
        {!d.rows.length && <EmptyTable>Não há dados disponíveis</EmptyTable>}
      </div>
      {d.page && (
        <Pager>
          {d.page}
          <ToolIcon width={87} height={28} viewBox="2 0 87 28" fill="none" stroke="#dadce0" strokeWidth={3.4}>
            <path d="M41 4L31 14.500 41 25M76.500 4L87 14.500 76.500 25" />
          </ToolIcon>
        </Pager>
      )}
    </Card>
  );
}

/* ---------- taskbar ---------- */

const Taskbar = styled.footer`
  display: flex;
  height: 26px;
  flex: none;
  padding-left: 603px;
  border-top: 2px solid #c2b5a9;
  background: linear-gradient(90deg, #ecdccb 0%, #e9d9cb 12%, #ebdcca 30%, #eadaca 34%, #ecdcc9 50%, #e6dacb 60%, #ebdac8 75%, #e5d9cc 86%, #ebdccb 100%);
`;

const Tray = styled.div`
  flex: 1;
  display: flex;
  justify-content: flex-end;
  align-items: flex-start;
`;

const TaskSvg = styled.svg`
  display: block;
  flex: none;
  font-family: ${SANS};
`;

const apps: React.ReactNode[] = [
  <><path d="M619 1675q0-2 2-2h14.500v8H619z" fill="#3cc0f5" /><path d="M637 1673h15q2 0 2 2v6h-17z" fill="#2196dc" /></>,
  <circle cx={702} cy={1685} r={10.500} fill="none" stroke="#333" strokeWidth={3.6} />,
  <rect x={761} y={1673} width={27} height={12} rx={1.500} fill="#fafafa" />,
  <><path d="M819 1675h18l5 4v3h-20z" fill="#f4f4f4" stroke="#777" strokeDasharray="2 1" /><path d="M852 1673l-4 8" stroke="#8a4b2a" strokeWidth={2.500} /></>,
  <circle cx={901.500} cy={1686} r={11.500} fill="none" stroke="#8e35b5" strokeWidth={4.500} />,
  <><circle cx={968} cy={1687} r={14} fill="#e8f5ec" stroke="#1d9055" strokeWidth={3} /><circle cx={982} cy={1677} r={12} fill="#0078d4" /><text x={982} y={1679} fontSize={16} fill="#fff" textAnchor="middle">9</text></>,
  <><path d="M1033 1681v-6l3-2.500h12V1681z" fill="#ddd" stroke="#111" strokeWidth={1.500} /><rect x={1036} y={1676} width={9} height={6} fill="#00f" /><path d="M1041 1677l-2 4" stroke="#fff" /></>,
  <><rect x={1072} y={1662} width={56} height={24} rx={5} fill="#f4ebe3" stroke="#e8ddd2" /><circle cx={1100} cy={1688} r={16.500} fill="#e94235" /><circle cx={1113} cy={1676} r={11.500} fill="#6b5138" /><ellipse cx={1116} cy={1675} rx={5.500} ry={6.500} fill="#d9a788" /><path d="M1108 1678h6l-2 4h-5z" fill="#a6d92a" /></>,
  <path d="M1152 1681l6-6.500q1-1 3-1h11q2 0 2 2v5.500z" fill="#1173e0" />,
  <><circle cx={1232} cy={1679} r={5.500} fill="#7b83eb" /><circle cx={1243} cy={1681} r={4} fill="#4f59c9" /></>,
  <><path d="M1290 1678v-4h16v4" fill="none" stroke="#2cb8ff" strokeWidth={2.200} /><rect x={1280} y={1677} width={35} height={6} rx={2} fill="#0f5aa8" /></>,
  <><rect x={1348} y={1674} width={32} height={9} rx={1.500} fill="#1b87cf" /><rect x={1353} y={1678} width={16} height={5} fill="#3ccbf4" /></>,
  <path d="M1418 1674q3-2 6 0 1 3 6 3t6-3q3-2 6 0l-3 7h-18z" fill="#7f858c" />,
  <><circle cx={1496} cy={1679} r={5.500} fill="#7b83eb" /><circle cx={1507} cy={1681} r={4} fill="#4f59c9" /></>,
  <circle cx={1561} cy={1691} r={15.500} fill="#a9a9ab" />,
  <><path d="M1610 1681v-3q0-2 2-2h10v5z" fill="#c9c9c9" /><path d="M1622 1676h12v5h-12z" fill="#999" /><path d="M1634 1676h10q2 0 2 2v3h-12z" fill="#666" /></>,
  <><path d="M1676 1681v-6q0-1 1-1h10l4 3.500v4z" fill="#dc9a00" /><path d="M1686 1681l3-4h23v4z" fill="#ffd04d" /></>,
  <rect x={1750} y={1674} width={27} height={8} rx={1.500} fill="#42a5f0" />,
  <><rect x={1812} y={1675} width={28} height={8} rx={1.500} fill="#62d2ee" /><path d="M1817 1672v5M1823.500 1672v5M1830 1672v5M1836 1672v5" stroke="#0d5a78" strokeWidth={2.400} /></>,
  <path d="M1890 1681l10-8.500 10 4V1681z" fill="#1f9cf0" />,
];

export default function App() {
  return (
    <Page>
      <Global />
      <Hero>
        <WorldMap />
        <TopRule />
        <LeftColumn>
          <TitleRow>
            <PageTitle>Visão geral em tempo real</PageTitle>
            <StatusPill>
              <ToolIcon width={34} height={34} viewBox="0 0 34 34" fill="none" stroke="#137333" strokeWidth={3.2}>
                <circle cx={17} cy={17} r={14.200} />
                <path d="M9.500 17.500L14.500 22.500 24.500 11.500" />
              </ToolIcon>
              <Caret $w={16} />
            </StatusPill>
          </TitleRow>
          <RealtimeCard>
            <Metrics>
              <div>
                <MetricLabel $w={511}>USUÁRIOS ATIVOS NOS ÚLTIMOS 30 MINUTOS</MetricLabel>
                <MetricValue>16</MetricValue>
              </div>
              <div>
                <MetricLabel $w={498}>USUÁRIOS ATIVOS NOS ÚLTIMOS 5 MINUTOS</MetricLabel>
                <MetricValue>5</MetricValue>
              </div>
            </Metrics>
            <MetricLabel $w={400} $plain>USUÁRIOS ATIVOS POR MINUTO</MetricLabel>
            <MinuteChart />
          </RealtimeCard>
        </LeftColumn>
        <RightColumn>
          <Toolbar>
            <ToolIcon width={35} height={35} viewBox="0 0 35 35" fill="none" stroke="#5f6368" strokeWidth={3.6}>
              <path d="M1.800 9.500V1.800H9.500M25 1.800h8.200V9.500M33.200 25v8.200H25M9.500 33.200H1.800V25" />
              <circle cx={17.500} cy={11.500} r={4.200} strokeWidth={2.900} />
              <path d="M7.500 27V25c0-3 5-5 10-5s10 2 10 5v2z" strokeWidth={2.900} />
            </ToolIcon>
            <Snapshot>Panorama do usuário</Snapshot>
            <ToolIcon $gap={34} width={28} height={28} viewBox="0 0 28 28" fill="none" stroke="#5f6368" strokeWidth={4}>
              <path d="M2 10V2h7.500M18.500 2H26v8M26 18v8h-7.500M9.500 26H2v-8" />
            </ToolIcon>
            <ToolIcon $gap={32} width={38} height={39} viewBox="0 0 38 39">
              <rect x={0} y={4} width={13.500} height={31} rx={3.500} fill="#5f6368" />
              <rect x={17} width={4.200} height={39} fill="#5f6368" />
              <rect x={26} y={5.700} width={10.200} height={27.600} rx={1.800} fill="none" stroke="#5f6368" strokeWidth={3.500} />
            </ToolIcon>
            <ToolIcon width={35} height={38} viewBox="0 0 35 38" fill="none" stroke="#5f6368" strokeWidth={3.300}>
              <circle cx={6} cy={19} r={4} />
              <circle cx={28.500} cy={6} r={4} />
              <circle cx={28.500} cy={32} r={4} />
              <path d="M9.500 17L25 8M9.500 21L25 30" />
            </ToolIcon>
          </Toolbar>
          <ZoomBox>
            <ToolIcon width={75} height={75} viewBox="0 0 75 75" stroke="#666" strokeWidth={7}>
              <path d="M20.500 37.500h34M37.500 20.500v34" />
            </ToolIcon>
            <ZoomDivider />
            <ToolIcon width={75} height={75} viewBox="0 0 75 75" stroke="#666" strokeWidth={7}>
              <path d="M20.500 37.500h34" />
            </ToolIcon>
          </ZoomBox>
          <Credits>
            <Credit $w={177}>Atalhos do teclado</Credit>
            <Credit $w={370}>Dados cartográficos ©2025 Google, INEGI</Credit>
            <Credit $w={81}>Termos</Credit>
          </Credits>
        </RightColumn>
      </Hero>
      <Cards>
        {cards.map((d, i) => (
          <ReportCard key={i} d={d} />
        ))}
      </Cards>
      <Taskbar>
        {apps.map((a, i) => (
          <TaskSvg key={i} width={66.5} height={24} viewBox={`${603 + 66.5 * i} 1656 66.5 24`}>{a}</TaskSvg>
        ))}
        <Tray>
          <TaskSvg width={275} height={24} viewBox="2840 1656 275 24">
            <circle cx={2874.500} cy={1685} r={8} fill="#e74c3c" />
            <text x={2915} y={1687} fontSize={19} textLength={34} fill="#222">POR</text>
            <path d="M2978 1684v-3q0-2 3-2h17q3 0 3 2v3" fill="none" stroke="#222" strokeWidth={2} />
          </TaskSvg>
        </Tray>
      </Taskbar>
    </Page>
  );
}
